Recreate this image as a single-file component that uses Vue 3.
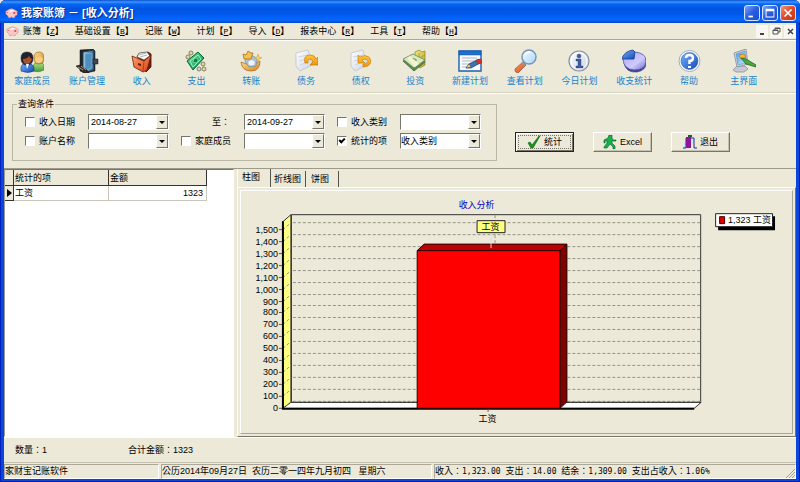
<script setup>
import { ref } from 'vue'

const menus = [
  ['账簿', 'Z'], ['基础设置', 'B'], ['记账', 'W'], ['计划', 'P'],
  ['导入', 'D'], ['报表中心', 'R'], ['工具', 'T'], ['帮助', 'H'],
]

// Each shape: [path, fill, stroke, stroke width]
const tools = [
  { label: '家庭成员', shapes: [
    ['M13 22v-5q1-4 6-4t5 5v3q-5 3-11 1z', 'url(#g-green)', '#3c7a28', 0.6],
    ['M14 9q0-6 5-6t5 6q0 6-5 6t-5-6z', 'url(#g-gold)', '#8a5a10', 0.6],
    ['M15 9q3 0 5-2 2 2 3 2 0 5-4 5t-4-5z', '#f5cf8a', 'none', 0],
    ['M1 22v-4q1-4 6-4t7 4v4q-6 3-13 0z', 'url(#g-blue)', '#173c8a', 0.6],
    ['M1 9q0-6 6-6t6 6q0 7-6 7t-6-7z', '#20222e', '#101018', 0.5],
    ['M3 10q4 0 6-3 1 2 3 3-1 5-5 5t-4-5z', '#a4532c', 'none', 0],
    ['M6 15l1 5 2-5z', '#fff', 'none', 0] ] },
  { label: '账户管理', shapes: [
    ['M5 1l13-1 2 2v20l-9 2-6-2z', '#23282e', '#111', 0.5],
    ['M8 3l11-2v20l-11 3z', 'url(#g-steel)', '#1b3548', 0.8],
    ['M10 5l7-1v15l-7 2z', '#4f8fbd', '#8fc0dc', 0.6],
    ['M18 10h5v5h-5z', '#40474e', '#101010', 0.5],
    ['M1 17l4-1 7 5 2 3H9z', '#332b25', '#111', 0.5],
    ['M3 18l5 3M6 17l5 4', 'none', '#c9b394', 0.8] ] },
  { label: '收入', shapes: [
    ['M7 7l11-4 3 2v13l-5 5z', '#7b1d0c', '#2b1410', 0.8],
    ['M7 8l2-4 8-1 3 4-6 4z', '#f8f8f4', '#444', 0.7],
    ['M9 6l7-2M10 8l7-2', 'none', '#888', 0.6],
    ['M2 7l12 5 7-6-4 15-4 2-9-5z', 'url(#g-orange)', '#6a1d0c', 0.8],
    ['M14 12l-1 10', 'none', '#a93214', 0.8],
    ['M8 14l3 1v2l-3-1z', '#641b0b', 'none', 0] ] },
  { label: '支出', shapes: [
    ['M3 12L14 3l6 6L9 21z', 'url(#g-cash)', '#096336', 1],
    ['M6 12l8-6 3 4-8 8z', 'none', '#b4ffd0', 0.8],
    ['M9 13q0-4 3-4t2 3-5 1z', '#137c4a', '#92f0bd', 0.7],
    ['M5 4a2 2 0 1 0 4 0a2 2 0 1 0-4 0', '#e3d9a6', '#6f694c', 0.8],
    ['M2 8a2 2 0 1 0 4 0a2 2 0 1 0-4 0', '#e3d9a6', '#6f694c', 0.8],
    ['M17 15a2 2 0 1 0 4 0a2 2 0 1 0-4 0', '#e3d9a6', '#6f694c', 0.8],
    ['M13 20a2 2 0 1 0 4 0a2 2 0 1 0-4 0', '#cfd8cd', '#6f694c', 0.8],
    ['M18 20a2 2 0 1 0 4 0a2 2 0 1 0-4 0', '#e3d9a6', '#6f694c', 0.8] ] },
  { label: '转账', shapes: [
    ['M2 13q10 5 19-1 0 10-9 10T2 13z', 'url(#g-gold)', '#a66216', 0.7],
    ['M6 13q0-5 5-6t7 4l-1 6-7 1z', '#a9c8e0', '#6582a0', 0.6],
    ['M4 5l3 1 2-4 3 2 2 0-2 6H5z', '#f3c249', '#a66216', 0.7],
    ['M9 12q4-3 7 0v4q-4 2-7 0z', '#eef4f8', '#7a96b0', 0.5],
    ['M19 5l1 3 3 1-3 1-1 3-1-3-3-1 3-1z', '#f6d06a', '#c08b30', 0.4] ] },
  { label: '债务', shapes: [
    ['M2 4l12-3 4 15-12 6-4-5z', 'url(#g-paper)', '#b7bfcc', 0.7],
    ['M4 8l10-2M5 12l9-3M6 16l8-3', 'none', '#c4cad4', 0.7],
    ['M11 14q-2-8 5-8 5 0 6 4l2-2v8h-8l3-3q-1-3-3-3-3 0-2 4z', 'url(#g-arrow)', '#c67a08', 0.7] ] },
  { label: '债权', shapes: [
    ['M2 4l12-3 4 15-12 6-4-5z', 'url(#g-paper)', '#b7bfcc', 0.7],
    ['M4 8l10-2M5 12l9-3M6 16l8-3', 'none', '#c4cad4', 0.7],
    ['M9 6l2 2q5-3 9 0 3 3 1 7-2 3-7 3v-3q4 0 5-2 0-3-3-3l-3 1 3 3H9z', 'url(#g-arrow)', '#c67a08', 0.6] ] },
  { label: '投资', shapes: [
    ['M12 3l4-2 3 2 3-1v14l-5 3-5-5z', 'url(#g-coin)', '#8d8420', 0.7],
    ['M16 4v12M12 7l4 2 6-3M12 11l4 2 6-3', 'none', '#9d9328', 0.7],
    ['M0 12l10-5 12 6-11 9z', '#5d8950', '#3f6a39', 0.8],
    ['M0 10l10-5 12 6-11 8z', '#d9e8bd', '#658a50', 0.8],
    ['M6 10q4-4 9 1-4 5-9-1z', '#87ab6e', '#f3f8df', 0.8],
    ['M4 9l3-2 9 8-4 3z', '#f4f3d5', 'none', 0] ] },
  { label: '新建计划', shapes: [
    ['M1 2h22v20H1z', '#f7fbff', '#1f5fb0', 1.4],
    ['M1 2h22v4H1z', '#1e6fd0', '#174f9c', 0.5],
    ['M4 9h15M4 12h14M4 15h9M4 18h7', 'none', '#9ba4b0', 0.8],
    ['M8 19l3-4 10-5 3 3-11 6z', '#3c73b5', '#1b3765', 0.7],
    ['M18 11l5-1 1 4-4 1z', '#d83328', '#8d1e18', 0.4],
    ['M8 19l3-4 2 3z', '#f5d394', '#503818', 0.4] ] },
  { label: '查看计划', shapes: [
    ['M10 13l3 3-8 8q-4-1-3-4z', 'url(#g-orange)', '#995d44', 0.8],
    ['M9 13l3 3', 'none', '#9298a0', 2],
    ['M9 8a7 7 0 1 0 14 0a7 7 0 1 0-14 0', 'url(#g-glass)', '#7193bd', 1.4],
    ['M12 6q1-3 5-3', 'none', '#fff', 1.5] ] },
  { label: '今日计划', shapes: [
    ['M2 12a10 10 0 1 0 20 0a10 10 0 1 0-20 0', 'url(#g-paper)', '#87919f', 1.2],
    ['M4 12a8 8 0 1 0 16 0a8 8 0 1 0-16 0', 'none', '#fff', 1],
    ['M10 7a2 2 0 1 0 4 0a2 2 0 1 0-4 0M9 10h5v7h2v2H9v-2h2v-5H9z', '#405e9e', '#293b72', 0.4] ] },
  { label: '收支统计', shapes: [
    ['M2 14q2 10 13 9 10-2 9-10v-3z', '#4b479d', '#2f3176', 0.6],
    ['M1 11q1-8 12-8 11 1 11 9 0 9-12 9-10-1-11-10z', 'url(#g-violet)', '#4247a0', 0.7],
    ['M0 9q3-7 11-8l2 2-1 7-12 0z', 'url(#g-blue)', '#173b94', 0.8] ] },
  { label: '帮助', shapes: [
    ['M2 12a10 10 0 1 0 21 0a10 10 0 1 0-21 0', '#f7faff', '#9daec7', 1],
    ['M4 12a8 8 0 1 0 17 0a8 8 0 1 0-17 0', 'url(#g-blue)', '#2352a1', 0.5],
    ['M9 9q0-3 3.500-3t3.500 3-3.500 3v3', 'none', '#fff', 2.4],
    ['M11 17h3v2h-3z', '#fff', 'none', 0] ] },
  { label: '主界面', shapes: [
    ['M1 21l4-4h8l3 3-4 3H4z', '#c6c8d3', '#858897', 0.7],
    ['M2 4l12-4 2 15-11 3z', '#d7d9e3', '#82899a', 0.8],
    ['M4 5l9-3 1 12-8 2z', 'url(#g-screen)', '#4c86bb', 0.5],
    ['M7 6l5-1 2 3-5 2z', '#f7b82c', '#a55a16', 0.5],
    ['M9 9l5 1 10 6v2l-10-3z', '#48a83c', '#236428', 0.8] ] },
]

const criteria = [
  { id: 'from', label: '收入日期', check: true, on: ref(false), date: '2014-08-27' },
  { id: 'to', label: '至：', check: false, date: '2014-09-27' },
  { id: 'kind', label: '收入类别', check: true, on: ref(false), options: [''] },
  { id: 'account', label: '账户名称', check: true, on: ref(false), options: [''] },
  { id: 'member', label: '家庭成员', check: true, on: ref(false), options: [''] },
  { id: 'item', label: '统计的项', check: true, on: ref(true), options: ['收入类别'] },
]

const tabs = ['柱图', '折线图', '饼图']
const activeTab = ref(0)

// Axis geometry inside the chart's view box
const zeroY = 218
const step = 12
const ticks = Array.from({ length: 16 }, (_, i) => ({
  label: (i * 100).toLocaleString('en-US'),
  y: Math.round(zeroY - i * (step - 0.06)) + 0.5,
}))
</script>

<template>
  <div class="window">
    <svg class="defs" width="0" height="0" aria-hidden="true">
      <defs>
        <linearGradient id="g-blue" x2="1" y2="1"><stop stop-color="#75b5ff" /><stop offset="1" stop-color="#1547b4" /></linearGradient>
        <linearGradient id="g-green" x2="0" y2="1"><stop stop-color="#b6e58c" /><stop offset="1" stop-color="#459c34" /></linearGradient>
        <linearGradient id="g-gold" x2="1" y2="1"><stop stop-color="#ffdf83" /><stop offset="1" stop-color="#d98523" /></linearGradient>
        <linearGradient id="g-steel" x2="1" y2="0"><stop stop-color="#9cc9e6" /><stop offset="1" stop-color="#265d88" /></linearGradient>
        <linearGradient id="g-orange" x2="1" y2="1"><stop stop-color="#ffa06b" /><stop offset="1" stop-color="#d7441a" /></linearGradient>
        <linearGradient id="g-cash" x2="1" y2="1"><stop stop-color="#62e59d" /><stop offset="1" stop-color="#0c8c4b" /></linearGradient>
        <linearGradient id="g-paper" x2="1" y2="1"><stop stop-color="#fff" /><stop offset="1" stop-color="#cbd3e2" /></linearGradient>
        <linearGradient id="g-arrow" x2="0" y2="1"><stop stop-color="#ffc63a" /><stop offset="1" stop-color="#f0940c" /></linearGradient>
        <linearGradient id="g-coin" x2="1" y2="1"><stop stop-color="#f1eb7b" /><stop offset="1" stop-color="#b7a62b" /></linearGradient>
        <linearGradient id="g-glass" x2="1" y2="1"><stop stop-color="#f7fdff" /><stop offset="1" stop-color="#a8d4f5" /></linearGradient>
        <linearGradient id="g-violet" x2="1" y2="1"><stop stop-color="#aaa6ee" /><stop offset="0.6" stop-color="#cfcaff" /><stop offset="1" stop-color="#6b69c8" /></linearGradient>
        <linearGradient id="g-screen" x2="1" y2="1"><stop stop-color="#4d9fe1" /><stop offset="1" stop-color="#c6eafb" /></linearGradient>
        <symbol id="pig" viewBox="0 0 14 12">
          <path d="M3 3q4-3 8 0l2 1v4l-2 1-1 2H8l-1-1-1 1H4L3 9 1 7V4z" fill="#fbc6c6" stroke="#e38d90" stroke-width=".7" />
          <path d="M4 4q3-2 6-1l-4 2z" fill="#fff" />
          <path d="M2 5h1v1H2zM9 5h2v2H9z" fill="#c45a62" />
        </symbol>
      </defs>
    </svg>

    <header class="titlebar">
      <svg class="pig"><use href="#pig" /></svg>
      <h1>我家账簿 － [收入分析]</h1>
      <button class="win-btn" aria-label="最小化"><svg viewBox="0 0 16 16"><path d="M4 11h5v2H4z" fill="#fff" /></svg></button>
      <button class="win-btn" aria-label="最大化"><svg viewBox="0 0 16 16"><path d="M3 3h10v10H3zM4 6v6h8V6z" fill="#fff" fill-rule="evenodd" /></svg></button>
      <button class="win-btn close" aria-label="关闭"><svg viewBox="0 0 16 16"><path d="M4 4l8 8M12 4l-8 8" stroke="#fff" stroke-width="2" /></svg></button>
    </header>

    <div class="client">
      <nav class="menubar">
        <svg class="pig"><use href="#pig" /></svg>
        <button v-for="m in menus" :key="m[1]" class="menu">{{ m[0] }}<b>【<u>{{ m[1] }}</u>】</b></button>
        <span class="mdi">
          <button aria-label="最小化子窗口"><svg viewBox="0 0 12 12"><path d="M4 8h4v2H4z" fill="#444" /></svg></button>
          <button aria-label="还原子窗口"><svg viewBox="0 0 12 12"><path d="M5 5V3h5v4H8M3 5h5v4H3zM3 5.500h5M5 3.500h5" fill="none" stroke="#555" /></svg></button>
          <button aria-label="关闭子窗口"><svg viewBox="0 0 12 12"><path d="M4 4l5 5M9 4l-5 5" stroke="#444" stroke-width="1.500" /></svg></button>
        </span>
      </nav>

      <div class="toolbar">
        <button v-for="t in tools" :key="t.label" class="tool">
          <svg viewBox="0 0 24 24">
            <path v-for="(s, i) in t.shapes" :key="i" :d="s[0]" :fill="s[1]" :stroke="s[2]" :stroke-width="s[3]" />
          </svg>
          <span>{{ t.label }}</span>
        </button>
      </div>

      <form class="query" @submit.prevent>
        <fieldset>
          <legend>查询条件</legend>
          <div class="criteria">
            <div v-for="c in criteria" :key="c.id" class="criterion">
              <label v-if="c.check" class="check"><input v-model="c.on.value" type="checkbox" /><span>{{ c.label }}</span></label>
              <label v-else class="plain" :for="c.id">{{ c.label }}</label>
              <div class="combo">
                <input v-if="c.date" :id="c.id" type="text" :value="c.date" :aria-label="c.label" />
                <select v-else :id="c.id" :aria-label="c.label"><option v-for="o in c.options" :key="o">{{ o }}</option></select>
                <span class="arrow"><svg viewBox="0 0 6 3"><path d="M0 0h6L3 3z" /></svg></span>
              </div>
            </div>
          </div>
        </fieldset>
        <div class="actions">
          <button class="action default">
            <svg viewBox="0 0 14 14"><path d="M1 8l2-1 2 3 7-9h1L6 13H4z" fill="#159a1b" stroke="#075c0c" stroke-width=".6" /></svg>统计
          </button>
          <button class="action">
            <svg viewBox="0 0 14 14"><path d="M6 0h3v3l1 2h3v1H9v2l3 3v3h-2v-2L7 9l-3 4H1v-1l3-4V6H2V8H1V5l4-2z" fill="#18b04c" stroke="#075c2c" stroke-width=".6" /></svg>Excel
          </button>
          <button class="action">
            <svg viewBox="0 0 14 14"><path d="M3 3h8v10h3M0 13h3V3" fill="#bfeaf5" stroke="#24318c" /><path d="M3 2h5v11H3z" fill="#8d149c" /><path d="M5 0h4v2H5z" fill="#1d5a43" /></svg>退出
          </button>
        </div>
      </form>

      <main class="work">
        <section class="grid">
          <table>
            <colgroup><col class="mark" /><col class="name" /><col class="sum" /></colgroup>
            <thead><tr><th></th><th>统计的项</th><th>金额</th></tr></thead>
            <tbody>
              <tr>
                <td><svg viewBox="0 0 5 8"><path d="M0 0l5 4-5 4z" /></svg></td>
                <td>工资</td>
                <td>1323</td>
              </tr>
            </tbody>
          </table>
        </section>

        <section class="charts">
          <div class="tabs" role="tablist">
            <button v-for="(t, i) in tabs" :key="t" role="tab" :aria-selected="i === activeTab" :class="{ active: i === activeTab }" @click="activeTab = i">{{ t }}</button>
          </div>
          <div class="pane">
            <svg class="chart" viewBox="1 1 552 242">
              <text class="title" x="237" y="18" text-anchor="middle">收入分析</text>

              <path d="M43 31.500l8-7v188l-8 6z" class="wall" />
              <path d="M43 218.500l8-6h411l-7 6z" class="floor" />
              <path d="M51.500 212V24.500h410V212" class="edge" />
              <g v-for="t in ticks" :key="t.label">
                <path :d="`M53 ${t.y - 7}H461`" class="gridline" />
                <path :d="`M43 ${t.y}l8-7`" class="gridline" />
                <path :d="`M39 ${t.y}h3`" class="tick" />
                <text x="38" :y="t.y + 3" text-anchor="end">{{ t.label }}</text>
              </g>
              <path d="M51.500 212.500H461" class="baseline" />
              <path d="M43 31v188H455" class="axis" />

              <path d="M177.500 60.500l7-6.500h143l-7 6.500z" class="bar-top" />
              <path d="M320.500 60.500l7-6.500v158l-7 6.500z" class="bar-side" />
              <path d="M177.500 60.500h143v158h-143z" class="bar-front" />

              <path d="M255.500 25v29" class="gridline" />
              <path d="M251.500 43v15" class="callout" />
              <path d="M237.500 30.500h28v12h-28z" class="flag" />
              <text x="251" y="40" text-anchor="middle">工资</text>

              <path d="M248.500 219v3" class="tick" />
              <text x="248" y="232" text-anchor="middle">工资</text>

              <path d="M479 26h57v14h-57z" />
              <path d="M476.500 23.500h57v13h-57z" class="key" />
              <path d="M480.500 26.500h5v7h-5z" class="swatch" />
              <text x="489" y="33">1,323 工资</text>
            </svg>
          </div>
        </section>
      </main>

      <div class="totals"><span>数量：1</span><span>合计金额：1323</span></div>

      <footer class="status">
        <span class="cell">家财宝记账软件</span>
        <span class="cell">公历2014年09月27日&nbsp; 农历二零一四年九月初四&nbsp;&nbsp; 星期六</span>
        <span class="cell last">收入：<i>1,323.00 </i>支出：<i>14.00 </i>结余：<i>1,309.00 </i>支出占收入：<i>1.06%</i>
          <svg class="grip" viewBox="0 0 10 10"><path d="M1 10l9-9M4 10l6-6M7 10l3-3" stroke="#a5a294" fill="none" /></svg>
        </span>
      </footer>
    </div>
  </div>
</template>

<style>
body {
  margin: 0;
  background: #dfe6f2;
}
</style>

<style scoped>
.window {
  box-sizing: border-box;
  display: flex;
  flex-direction: column;
  height: 100vh;
  min-height: 380px;
  padding: 0 4px 3px;
  background: #0a45dc;
  border-radius: 6px 6px 0 0;
  box-shadow: inset -1px -1px #0020a0, inset 1px 0 #0020c0;
  overflow: hidden;
  color: #000;
  font: 9px/12px "Liberation Sans", "Noto Sans CJK SC", sans-serif;
}
.defs {
  position: absolute;
}
button, input, select {
  box-sizing: border-box;
  margin: 0;
  padding: 0;
  border: 0;
  border-radius: 0;
  background: none;
  color: inherit;
  font: inherit;
  appearance: none;
}
svg {
  display: block;
}
.titlebar {
  display: flex;
  flex: none;
  align-items: center;
  gap: 2px;
  height: 23px;
  margin: 0 -4px;
  padding: 2px 4px 0 5px;
  box-sizing: border-box;
  background: linear-gradient(#0a50d0, #3d96ff 2px, #0766f0 4px, #0054e3 9px, #0058ea 14px, #0668ff 20px, #0046c8 23px);
}
.pig {
  flex: none;
  width: 13px;
  height: 12px;
}
h1 {
  flex: 1;
  margin: 0 0 0 1px;
  color: #fff;
  font-size: 11px;
  line-height: 16px;
  text-shadow: 1px 1px #0a2a80;
  white-space: nowrap;
}
.win-btn {
  width: 16px;
  height: 16px;
  border: 1px solid #d9e6ff;
  border-radius: 3px;
  background: linear-gradient(135deg, #7ea6f5, #2a5de0 50%, #1c4dd0);
}
.win-btn.close {
  background: linear-gradient(135deg, #f0967b, #e0492a 50%, #c53312);
}
.client {
  display: flex;
  flex: 1;
  flex-direction: column;
  min-height: 0;
  background: #ece9d8;
}
.menubar {
  display: flex;
  flex: none;
  align-items: center;
  height: 16px;
  padding-left: 2px;
  border-bottom: 1px solid #aca899;
  white-space: nowrap;
}
.menu {
  margin-right: 11px;
}
.menubar .pig {
  margin-right: 4px;
}
.menu u {
  font: 8px/12px "Liberation Mono", monospace;
}
.mdi {
  display: flex;
  gap: 2px;
  margin-left: auto;
}
.mdi button {
  width: 12px;
  height: 13px;
  background: #f8f7f1;
}
.toolbar {
  display: grid;
  flex: none;
  grid-template-columns: repeat(14, 1fr);
  padding: 8px 25px 6px 1px;
  border-top: 1px solid #fff;
  border-bottom: 1px solid #fff;
  box-shadow: 0 -1px #d5d2c2 inset;
}
.tool {
  display: grid;
  justify-items: center;
  gap: 2px;
  color: #1583cf;
  white-space: nowrap;
}
.tool svg {
  width: 24px;
  height: 24px;
}
.query {
  display: flex;
  flex: none;
  align-items: flex-start;
  gap: 18px;
  padding: 4px 8px 7px;
  border-bottom: 1px solid #9d9a8c;
}
fieldset {
  margin: 0;
  padding: 0 15px 11px 12px;
  border: 1px solid #bab7a6;
}
legend {
  margin-left: -8px;
  padding: 0 1px;
}
.criteria {
  display: grid;
  grid-template-columns: 144px 144px 144px;
  column-gap: 12px;
  row-gap: 3px;
  padding-top: 4px;
}
.criterion {
  display: flex;
  align-items: center;
  justify-content: space-between;
}
.check {
  display: flex;
  align-items: center;
  gap: 4px;
}
.check input {
  width: 10px;
  height: 10px;
  border: 1px solid;
  border-color: #77756a #fff #fff #77756a;
  background: #fff;
}
.check input:checked::before {
  content: "";
  display: block;
  box-sizing: border-box;
  width: 6px;
  height: 4px;
  margin: 1px;
  border: solid #000;
  border-width: 0 0 2px 2px;
  transform: rotate(-45deg);
}
.plain {
  margin-left: 31px;
}
.plain, .totals, .status {
  font-family: "Liberation Sans", "Noto Sans CJK TC", sans-serif;
}
.combo {
  display: grid;
  width: 81px;
  height: 16px;
  box-sizing: border-box;
  border: 1px solid;
  border-color: #77756a #fff #fff #77756a;
  background: #fff;
}
.combo > * {
  grid-area: 1 / 1;
}
.combo input, .combo select {
  width: 100%;
  height: 14px;
  padding: 0 13px 0 2px;
  outline: 0;
  line-height: 12px;
}
.combo select {
  padding-left: 0;
}
.arrow {
  display: grid;
  place-items: center;
  justify-self: end;
  width: 12px;
  height: 14px;
  box-sizing: border-box;
  border: 1px solid;
  border-color: #fff #77756a #77756a #fff;
  background: #ece9d8;
  pointer-events: none;
}
.arrow svg {
  width: 6px;
  height: 3px;
}
.actions {
  display: flex;
  gap: 19px;
  padding-top: 34px;
}
.action {
  display: flex;
  align-items: center;
  justify-content: center;
  gap: 3px;
  width: 59px;
  height: 20px;
  border: 1px solid;
  border-color: #fff #77756a #77756a #fff;
  box-shadow: inset -1px -1px #c5c2b2;
}
.action svg {
  width: 14px;
  height: 14px;
}
.action.default {
  border: 1px solid #222;
  outline: 1px dotted #77756a;
  outline-offset: -4px;
  box-shadow: inset 1px 1px #fff, inset -1px -1px #77756a;
}
.work {
  display: flex;
  flex: 1;
  gap: 3px;
  min-height: 0;
}
.grid {
  flex: none;
  width: 230px;
  box-sizing: border-box;
  border: 1px solid;
  border-color: #77756a #fff #fff #9b998c;
  background: #fff;
}
table {
  width: 202px;
  table-layout: fixed;
  border-collapse: separate;
  border-spacing: 0;
}
.mark {
  width: 9px;
}
.name {
  width: 95px;
}
.sum {
  width: 98px;
}
th, td {
  box-sizing: border-box;
  height: 16px;
  padding: 0 1px;
  text-align: left;
  font-weight: 400;
  white-space: nowrap;
}
th {
  border: solid #333;
  border-width: 0 1px 1px 0;
  background: #ece9d8;
}
td {
  height: 15px;
  border: solid #c9c7ba;
  border-width: 0 1px 1px 0;
}
td:first-child {
  border-color: #333;
  background: #ece9d8;
}
td:last-child {
  padding-right: 3px;
  text-align: right;
}
td svg {
  width: 5px;
  height: 8px;
  margin: auto;
}
.charts {
  display: flex;
  flex: 1;
  flex-direction: column;
  min-width: 0;
}
.tabs {
  display: flex;
  flex: none;
  align-items: flex-end;
  height: 18px;
}
.tabs button {
  height: 16px;
  padding: 0 4px 0 3px;
  border-right: 1px solid #55534a;
  white-space: nowrap;
}
.tabs button.active {
  height: 18px;
  padding: 0 10px 2px 4px;
  border-left: 1px solid #fff;
}
.tabs button:last-child {
  padding: 0 9px 0 5px;
}
.pane {
  display: flex;
  flex: 1;
  min-height: 0;
  padding: 2px;
  border: 1px solid;
  border-color: #fff #77756a #77756a #fff;
}
.chart {
  flex: 1;
  min-width: 0;
  height: 100%;
  box-sizing: border-box;
  border: 1px solid;
  border-color: #fff #aca899 #aca899 #fff;
}
.title {
  fill: #0000c8;
}
.wall {
  fill: #ffff80;
  stroke: #333;
}
.floor {
  fill: #fff;
  stroke: #333;
}
.edge {
  fill: none;
  stroke: #333;
}
.gridline {
  fill: none;
  stroke: #96948a;
  stroke-dasharray: 3 2;
}
.baseline {
  stroke: #333;
  stroke-dasharray: 3 1;
}
.tick {
  stroke: #555;
}
.axis {
  fill: none;
  stroke: #000;
  stroke-width: 2;
}
.bar-top {
  fill: #c00000;
  stroke: #200;
}
.bar-side {
  fill: #800000;
  stroke: #200;
}
.bar-front {
  fill: #f00;
  stroke: #200;
}
.callout {
  stroke: #ddd;
}
.flag {
  fill: #ffff80;
  stroke: #222;
}
.key {
  fill: #fff;
  stroke: #222;
}
.swatch {
  fill: #e00000;
  stroke: #400;
}
.totals {
  display: flex;
  flex: none;
  gap: 81px;
  padding: 6px 11px;
  border-top: 1px solid #fff;
}
.status {
  display: grid;
  flex: none;
  grid-template-columns: 155px 271px 1fr;
  gap: 2px;
  padding-top: 1px;
  border-top: 1px solid #c5c2b2;
  white-space: nowrap;
}
.cell {
  height: 15px;
  box-sizing: border-box;
  overflow: hidden;
  border: 1px solid;
  border-color: #aca899 #fff #fff #aca899;
  line-height: 13px;
}
.cell.last {
  display: flex;
  white-space: pre;
}
.cell i {
  font: 8px/13px "DejaVu Sans Mono", monospace;
}
.grip {
  align-self: flex-end;
  width: 10px;
  height: 10px;
  margin-left: auto;
}
</style>
